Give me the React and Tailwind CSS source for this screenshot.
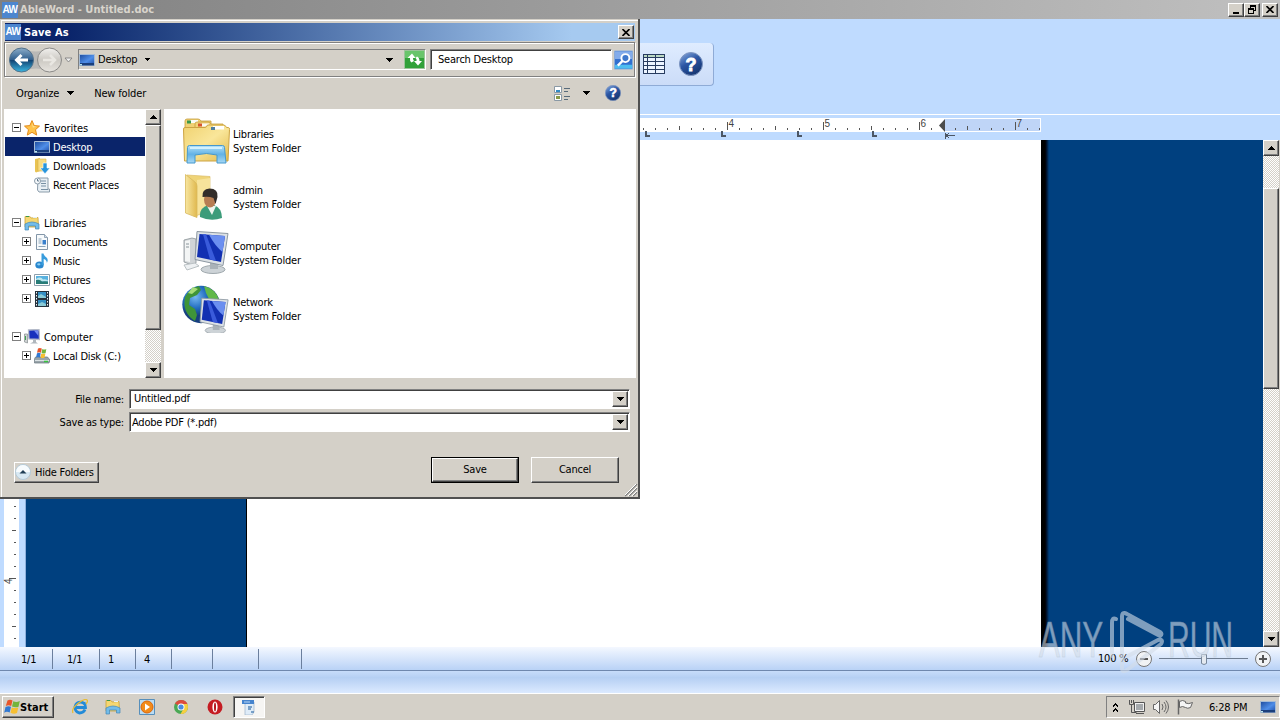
import React from 'react';

const raised =
  'border border-t-white border-l-white border-r-[#404040] border-b-[#404040] bg-[#d4d0c8] shadow-[inset_-1px_-1px_0_#808080]';
const sunken =
  'border border-t-[#808080] border-l-[#808080] border-r-white border-b-white shadow-[inset_1px_1px_0_#404040]';
const track =
  'bg-[conic-gradient(#fff_25%,#d4d0c8_0_50%,#fff_0_75%,#d4d0c8_0)] bg-[length:2px_2px]';

const Arrow = ({ up, className = '' }) => (
  <svg className={className} width="7" height="4" viewBox="0 0 7 4" shapeRendering="crispEdges">
    <path d={up ? 'M3 0h1v1h1v1h1v1h1v1H0V3h1V2h1V1h1z' : 'M0 0h7v1H6v1H5v1H4v1H3V3H2V2H1V1H0z'} />
  </svg>
);

const AwLogo = () => (
  <div className="flex h-4 w-4 shrink-0 items-center justify-center bg-[#4d86cf] font-['Liberation_Sans_Narrow','Liberation_Sans',sans-serif] text-[10px] font-bold tracking-[-0.5px] text-white">
    AW
  </div>
);

const Monitor = ({ size = 16 }) => (
  <svg width={size} height={size} viewBox="0 0 16 16">
    <defs>
      <linearGradient id="screen" x2="1" y2="1">
        <stop stopColor="#1c4a9c" />
        <stop offset=".55" stopColor="#4f8ee8" />
        <stop offset="1" stopColor="#1b4aa5" />
      </linearGradient>
    </defs>
    <path d="M.5 2.5h15v11H.5z" fill="url(#screen)" stroke="#a5bbd5" />
    <path d="M1 11h14v2.5H1z" fill="#1b3f7c" />
    <path d="M1 12h2v1.5H1z" fill="#b7e4ee" />
  </svg>
);

const Star = () => (
  <svg width="16" height="16" viewBox="0 0 16 16">
    <path d="M8 .6l2.200 5 5.300.5-4 3.600 1.200 5.400L8 12.300l-4.700 2.800 1.200-5.400-4-3.600 5.300-.5z" fill="#ffc34a" stroke="#e48a18" />
    <path d="M8 2.500l1.400 3.800 3.400.4-4 .8z" fill="#ffe49a" />
  </svg>
);

const Downloads = () => (
  <svg width="16" height="16" viewBox="0 0 16 16">
    <path d="M1 1l5-1v13l-4 1.500-1-1z" fill="#e9c352" />
    <path d="M4 1h8v12H4z" fill="#f8dc82" stroke="#d7b14c" strokeWidth=".6" />
    <path d="M9 5h4v5h3l-5 5.800L6 10h3z" fill="#2795dd" stroke="#fff" strokeWidth=".6" />
  </svg>
);

const Recent = () => (
  <svg width="16" height="16" viewBox="0 0 16 16">
    <path d="M4 1h10v11h1.500v3H5l-1.500-2z" fill="#e8eff4" stroke="#8b9caa" />
    <path d="M7 4h5M7 6.500h5M7 9h5M7 12.500h7" stroke="#7890a4" />
    <circle cx="3.500" cy="4" r="3" fill="#f6f9fb" stroke="#8b9caa" />
    <path d="M3.500 2v2H5" fill="none" stroke="#60788c" />
  </svg>
);

const LibrarySmall = () => (
  <svg width="16" height="16" viewBox="0 0 16 16">
    <path d="M1 3V1.500h5L7 3l7-.5.5 9.500H1z" fill="#f5d771" stroke="#c9a238" strokeWidth=".8" />
    <path d="M2 1.500h3" stroke="#39964a" />
    <path d="M9 2.500h4" stroke="#e5f1f8" />
    <path d="M1 9q7-4 14 0v5h-3.500v-3h-7v4H1z" fill="#72bce9" stroke="#4386b8" strokeWidth=".7" />
  </svg>
);

const Documents = () => (
  <svg width="16" height="16" viewBox="0 0 16 16">
    <path d="M2.500.5h8l3 3v12h-11z" fill="#f7fafc" stroke="#8396a8" />
    <path d="M10.500.5v3h3" fill="#cfdce7" stroke="#8396a8" strokeWidth=".8" />
    <path d="M4.500 5h3M4.500 7h3M4.500 9h3M4.500 12.500h7" stroke="#8aa4b9" />
    <path d="M8.500 6h3.500v4.500H8.500z" fill="#3980cc" />
  </svg>
);

const Music = () => (
  <svg width="16" height="16" viewBox="0 0 16 16">
    <ellipse cx="5.500" cy="12" rx="4.200" ry="3.600" fill="#2987ce" />
    <path d="M7.500 12V.5h2Q10 3 13 5q1.500 2.500-.2 5Q13 7 9.700 6v6z" fill="#399ddd" />
    <ellipse cx="4.800" cy="11.300" rx="1.700" ry="1.100" fill="#8bd0f4" />
  </svg>
);

const Pictures = () => (
  <svg width="16" height="16" viewBox="0 0 16 16">
    <path d="M.5 2.500h15v11H.5z" fill="#fff" stroke="#8ea0ad" />
    <path d="M2 4h12v8H2z" fill="#58b1df" />
    <path d="M2 7q5-3 7 .5 2-1 5 1v1H2z" fill="#bde8ef" />
    <path d="M2 8q4-1 6 1.500 3-.5 6 0V12H2z" fill="#287c77" />
  </svg>
);

const Videos = () => (
  <svg width="16" height="16" viewBox="0 0 16 16">
    <path d="M1 0h14v16H1z" fill="#26323d" />
    <path d="M4 1h8v6H4zM4 9h8v6H4z" fill="#348fc4" />
    <path d="M4 5l3-2 5 3v1H4zM4 13l4-2 4 2v2H4z" fill="#8acbd7" />
    <path d="M2.500 1v14M13.500 1v14" stroke="#f3f6f8" strokeDasharray="1.500 1.500" />
  </svg>
);

const ComputerSmall = () => (
  <svg width="16" height="16" viewBox="0 0 16 16">
    <path d="M.5 5h3v9l-3-1z" fill="#cfd3d3" stroke="#868e91" strokeWidth=".7" />
    <path d="M1.500 7v4" stroke="#3fa353" />
    <path d="M4.500 1L15 .5l.5 10L5 10z" fill="#1831bd" stroke="#b4bac8" strokeWidth="1.300" />
    <path d="M10 1.500h4v5z" fill="#768df0" />
    <path d="M9 11h3v2l2 1.500H6L9 13z" fill="#b0b7bd" />
  </svg>
);

const Flag = ({ size = 16 }) => (
  <svg width={size} height={size} viewBox="0 0 16 16">
    <path d="M3.500 1.500Q6 0 8.500 1.500L7.200 7Q4.500 5.700 1.800 7z" fill="#e8562a" />
    <path d="M9.300 2.200q3 1.500 6.500-.2L14.500 7.700q-3 1.200-6.500-.2z" fill="#74b43c" />
    <path d="M1.500 8q3-1.500 5.500-.2L5.700 13.500q-3-1.500-5.500.2z" fill="#3179d2" />
    <path d="M7.800 8.500q3.200 1.200 6.500 0L13 14q-3 1.500-6.500-.2z" fill="#f7bf31" />
  </svg>
);

const Disk = () => (
  <svg width="16" height="16" viewBox="0 0 16 16">
    <path d="M1.500 9h12l2.500 3-1 3H.5L0 12z" fill="#9aa5ab" stroke="#66747d" strokeWidth=".7" />
    <path d="M1 12.500h14" stroke="#dce3e5" />
    <path d="M10 13.500h4" stroke="#38c43e" strokeWidth="1.500" />
    <path d="M4 .5q2-1 3.800 0L7 4.700q-2-1-4 0z" fill="#e8562a" />
    <path d="M8.300 1q2 1 4 0L11.600 5q-2 1-4 0z" fill="#74b43c" />
    <path d="M3 5.300q2-1 3.700 0L6 9.500q-2-1-4 0z" fill="#3179d2" />
    <path d="M7.200 5.500q2 1 4.200 0L10.600 9.500q-2 1-4 0z" fill="#f7bf31" />
  </svg>
);

const LibrariesLarge = () => (
  <svg width="48" height="48" viewBox="0 0 48 48">
    <defs>
      <linearGradient id="manila" x2="1" y2="1">
        <stop stopColor="#f0d270" />
        <stop offset=".5" stopColor="#f9e69a" />
        <stop offset="1" stopColor="#e3ba4c" />
      </linearGradient>
      <linearGradient id="stand" x2="0" y2="1">
        <stop stopColor="#b5e2f8" />
        <stop offset=".5" stopColor="#62b2e6" />
        <stop offset="1" stopColor="#a6d8f4" />
      </linearGradient>
    </defs>
    <path d="M3 12V4q0-2 2-2h11q2 0 3 2h10v20H3z" fill="#f0d174" stroke="#c49c3b" strokeWidth=".8" />
    <path d="M8 3h8v3H8z" fill="#f8fbf5" />
    <path d="M5 3.500h4v3H5z" fill="#3b984a" />
    <path d="M13 12V7q0-2 2-2h11q2 0 3 2h12v20H13z" fill="#f2d47a" stroke="#c49c3b" strokeWidth=".8" />
    <path d="M18 6.500h9v3h-9z" fill="#faf8f1" />
    <path d="M16 6.500h4v3h-4z" fill="#d6562d" />
    <path d="M1.500 12q0-1.500 1.500-1.500h20q1.500 0 2.500-2.500h16q2 0 3 2.500h2q1 0 1 2L46 44H2.500z" fill="url(#manila)" stroke="#cda443" />
    <path d="M31 9h11v3.500H31z" fill="#fff" />
    <path d="M29 10h4v3h-4z" fill="#507fa0" />
    <path d="M7.500 28.500h33q2 0 2 2L44 46h-9V38q-10-3-22 0v8H5l.5-15.500q0-2 2-2z" fill="url(#stand)" stroke="#4598ce" />
    <path d="M8 31h32" stroke="#d2f1ff" strokeWidth="2" fill="none" />
  </svg>
);

const AdminLarge = () => (
  <svg width="48" height="48" viewBox="0 0 48 48">
    <defs>
      <linearGradient id="folder" x2="1">
        <stop stopColor="#f8e6a0" />
        <stop offset="1" stopColor="#e0b94f" />
      </linearGradient>
    </defs>
    <path d="M5 2l23 1.500v34l-16 6z" fill="#efd478" stroke="#dcbd68" strokeWidth=".7" />
    <path d="M15 7l13-2v30l-13 7z" fill="#f7e39b" />
    <path d="M3.500 1.500L13 9q2 1.500 2 4v31.500L3.500 40z" fill="url(#folder)" stroke="#d8b95e" strokeWidth=".8" />
    <path d="M18 44q-1-9 8-12h6q8 3 8 13-11 4-22-1z" fill="#3c9c7a" />
    <path d="M25 33l5 9 4-9z" fill="#eef5ee" />
    <ellipse cx="28" cy="26.500" rx="6" ry="8" fill="#b77d53" />
    <path d="M20.500 24q-1-8 7-8.500 9 0 8 8.500l-2 7-2-6q-5-2-11-1z" fill="#332d2a" />
  </svg>
);

const Screen = () => (
  <>
    <ellipse cx="31" cy="40.500" rx="12" ry="4" fill="#cdd3d7" stroke="#9fa8ad" />
    <path d="M28 33h8v7h-8z" fill="#aab2b8" />
    <path d="M15 2.500l31 2L41 36.500l-28-6z" fill="#dce1e5" stroke="#8d98a2" />
    <path d="M17.500 5l25.500 2-4 26-24-5z" fill="#1230b2" />
    <path d="M27 5.800l16 1.200-2.500 16Q33 17 27 5.800z" fill="#6b8ff0" />
    <path d="M21 5.300h3L34 31.800l-6-1.200z" fill="#3a5bdb" />
  </>
);

const ComputerLarge = () => (
  <svg width="48" height="48" viewBox="0 0 48 48">
    <path d="M2 11l8-2 4 1v24l-4 2-8-3z" fill="#d0d4d7" stroke="#8a9397" strokeWidth=".8" />
    <path d="M3 12l5-1v22l-5-1z" fill="#f3f5f5" />
    <path d="M4 15h3M4 18h3" stroke="#89949a" />
    <Screen />
    <path d="M2 36l11-2 4 3-12 4z" fill="#eef1f3" stroke="#bac1c4" />
  </svg>
);

const NetworkLarge = () => (
  <svg width="48" height="48" viewBox="0 0 48 48">
    <defs>
      <radialGradient id="globe" cx=".35" cy=".3">
        <stop stopColor="#77b9f1" />
        <stop offset=".6" stopColor="#226dc0" />
        <stop offset="1" stopColor="#173f7f" />
      </radialGradient>
    </defs>
    <circle cx="19" cy="19.500" r="18.700" fill="url(#globe)" />
    <path d="M3 12Q8 3 17 1l2 4-4 5-7 3-1 7 6 4 2 6-2 6Q0 28 3 12z" fill="#3f9438" />
    <path d="M22 1q12 3 15 14l-5 2-5-3-3-6z" fill="#61b84a" />
    <path d="M11 2l5 2-6 5-4-1z" fill="#a8dd78" />
    <path d="M20 14l7 2 2 8-8 3z" fill="#5fb148" />
    <g transform="translate(7 11) scale(.85)"><Screen /></g>
  </svg>
);

const HelpBall = ({ size }) => (
  <svg width={size} height={size} viewBox="0 0 24 24">
    <defs>
      <linearGradient id="ball" x2=".6" y2="1">
        <stop stopColor="#8fb0e2" />
        <stop offset=".5" stopColor="#2b56a4" />
        <stop offset="1" stopColor="#163672" />
      </linearGradient>
    </defs>
    <circle cx="12" cy="12" r="11.500" fill="url(#ball)" stroke="#7d95c0" />
    <text x="12" y="18.500" textAnchor="middle" fontFamily="Liberation Sans" fontWeight="bold" fontSize="18" fill="#fff" stroke="#fff" strokeWidth=".9">?</text>
  </svg>
);

const tree = [
  { label: 'Favorites', Icon: Star, sign: '-', root: true },
  { label: 'Desktop', Icon: Monitor, selected: true },
  { label: 'Downloads', Icon: Downloads },
  { label: 'Recent Places', Icon: Recent },
  null,
  { label: 'Libraries', Icon: LibrarySmall, sign: '-', root: true },
  { label: 'Documents', Icon: Documents, sign: '+' },
  { label: 'Music', Icon: Music, sign: '+' },
  { label: 'Pictures', Icon: Pictures, sign: '+' },
  { label: 'Videos', Icon: Videos, sign: '+' },
  null,
  { label: 'Computer', Icon: ComputerSmall, sign: '-', root: true },
  { label: 'Local Disk (C:)', Icon: Disk, sign: '+' },
];

const files = [
  { label: 'Libraries', Icon: LibrariesLarge },
  { label: 'admin', Icon: AdminLarge },
  { label: 'Computer', Icon: ComputerLarge },
  { label: 'Network', Icon: NetworkLarge },
];

const Sign = ({ sign }) => (
  <svg width="9" height="9" viewBox="0 0 9 9" shapeRendering="crispEdges">
    {sign && <path d="M.5.5h8v8h-8z" fill="#fff" stroke="#808080" />}
    {sign && <path d={sign === '+' ? 'M2 4h5v1H2zM4 2h1v5H4z' : 'M2 4h5v1H2z'} />}
  </svg>
);

function TreeRow({ item }) {
  if (!item) return <div className="h-[19px]" />;
  const { label, Icon, sign, root, selected } = item;
  return (
    <div className={`flex h-[19px] items-center gap-[3px] ${root ? 'pl-[7px]' : 'pl-[17px]'} ${selected ? 'bg-[#0a246a] text-white' : ''}`}>
      <Sign sign={sign} />
      <Icon />
      <span className={`pt-0.5 ${root ? 'pl-px tracking-[-0.05px]' : ''}`}>{label}</span>
    </div>
  );
}

function ScrollBar({ before, thumb }) {
  return (
    <div className={`flex w-4 shrink-0 flex-col ${track}`}>
      <div className={`flex h-4 items-center justify-center ${raised}`}><Arrow up /></div>
      <div className={before} />
      <div className={`${thumb} ${raised}`} />
      <div className="flex-1" />
      <div className={`flex h-4 items-center justify-center ${raised}`}><Arrow /></div>
    </div>
  );
}

function Combo({ label, value, pad }) {
  return (
    <div className="flex h-5 items-center">
      <span className="w-[120px] pt-0.5 text-right">{label}</span>
      <div className={`ml-[5px] flex h-5 w-[501px] items-center bg-white p-px ${sunken}`}>
        <span className={`flex-1 ${pad}`}>{value}</span>
        <div className={`flex h-full w-4 items-center justify-center ${raised}`}><Arrow /></div>
      </div>
    </div>
  );
}

function CloseButton() {
  return (
    <div className={`flex h-[14px] w-4 items-center justify-center ${raised}`}>
      <svg width="8" height="7" viewBox="0 0 8 7"><path d="M.5 0L7.500 7M7.500 0L.5 7" stroke="#000" strokeWidth="1.600" /></svg>
    </div>
  );
}

function SaveDialog() {
  return (
    <div className="absolute top-[19px] left-0 flex h-[480px] w-[640px] flex-col border-r-2 border-b-2 border-[#505050] bg-[#d4d0c8] pt-1 pl-1 shadow-[inset_1px_1px_0_#d4d0c8,inset_2px_2px_0_#fff]">
      <div className="ml-px flex h-[18px] w-[630px] items-center bg-linear-to-r from-[#0a246a] from-10% to-[#a6caf0] to-90% pr-px">
        <AwLogo />
        <span className="ml-[3px] flex-1 pt-px font-bold tracking-[0.1px] text-white">Save As</span>
        <CloseButton />
      </div>

      <div className="mt-px flex h-[35px] w-[631px] items-center border border-[#808080] pl-1 shadow-[inset_1px_1px_0_#fff,1px_1px_0_#fff]">
        <svg width="66" height="28" viewBox="0 0 66 28">
          <defs>
            <linearGradient id="back" x2="0" y2="1">
              <stop stopColor="#8cadc9" />
              <stop offset=".48" stopColor="#315f8d" />
              <stop offset=".52" stopColor="#124574" />
              <stop offset="1" stopColor="#3bb7e2" />
            </linearGradient>
            <linearGradient id="forward" x2="0" y2="1">
              <stop stopColor="#f1f0ed" />
              <stop offset=".5" stopColor="#ccc9c3" />
              <stop offset="1" stopColor="#e7e4df" />
            </linearGradient>
          </defs>
          <path d="M12 3q15 5 30 0v22q-15-5-30 0z" fill="#b9b8b6" />
          <circle cx="12.500" cy="14" r="12" fill="url(#back)" stroke="#52718a" />
          <circle cx="40.500" cy="14" r="12" fill="url(#forward)" stroke="#8b8a88" />
          <path d="M12.500 9L7.500 14l5 5M8 14h11" stroke="#fff" strokeWidth="3" fill="none" />
          <path d="M41 9l5 5-5 5M34 14h11" stroke="#e9e7e2" strokeWidth="2.500" fill="none" />
          <path d="M56 12h7l-3.500 4z" fill="#eee" stroke="#777" strokeWidth=".8" />
        </svg>
        <div className="ml-[3px] flex h-[21px] w-[348px] items-center border border-t-[#808080] border-l-[#808080] border-r-white border-b-white">
          <Monitor />
          <span className="ml-[3px]">Desktop</span>
          <svg className="ml-2" width="5" height="3" viewBox="0 0 5 3" shapeRendering="crispEdges"><path d="M0 0h5v1H4v1H3v1H2V2H1V1H0z" /></svg>
          <Arrow className="ml-auto" />
          <svg className="ml-[11px]" width="21" height="19" viewBox="0 0 21 19">
            <path d="M.5.5h20v18H.5z" fill="#31a139" stroke="#9cc49a" />
            <path d="M1 1h19v7H1z" fill="#69c56b" />
            <path d="M7.500 12.500Q5.500 11 6 8H3.500L8 3.500 11.500 8H9q0 2 1 3zM13 6.500q2.500 1 2.500 4.500h2.500l-4 4.500L10 11h2.500q.5-2-1-3z" fill="#fff" />
          </svg>
        </div>
        <div className={`ml-1 flex h-[21px] w-[182px] items-center bg-white pt-px pl-[7px] ${sunken}`}>Search Desktop</div>
        <svg className="ml-0.5" width="19" height="20" viewBox="0 0 20 20">
          <path d="M.5.5h19v19H.5z" fill="#3270cf" stroke="#8badd8" />
          <path d="M1 1h18v8H1z" fill="#83aceb" />
          <path d="M1 15h18v4H1z" fill="#4dbdf0" />
          <circle cx="12" cy="8" r="4.200" fill="#3f78cc" stroke="#fff" strokeWidth="2" />
          <path d="M9 11l-5 5" stroke="#fff" strokeWidth="2.500" />
        </svg>
      </div>

      <div className="flex h-8 items-center pl-3 tracking-[-0.15px]">
        <span className="pt-px">Organize</span>
        <Arrow className="ml-2" />
        <span className="ml-5 pt-px">New folder</span>
        <svg className="ml-auto" width="16" height="15" viewBox="0 0 16 15">
          <path d="M.5.5h7v6h-7zM.5 8.500h7v6h-7z" fill="#fff" stroke="#8a99a5" />
          <path d="M2 4h4v2H2z" fill="#328ac5" />
          <path d="M2 10h4v3H2z" fill="#8a9a49" />
          <path d="M10 2.500h6M10 5.500h4M10 10.500h6M10 13.500h4" stroke="#586b7b" />
        </svg>
        <Arrow className="ml-[13px]" />
        <div className="mr-[17px] ml-[15px]"><HelpBall size={16} /></div>
      </div>

      <div className="flex h-[269px] w-[632px] bg-white">
        <div className="ml-px w-[140px] pt-[9px]">
          {tree.map((item, i) => <TreeRow key={i} item={item} />)}
        </div>
        <ScrollBar before="h-0" thumb="h-[205px]" />
        <div className="w-[3px] bg-[#d4d0c8]" />
        <div className="flex-1 pt-1 pl-[18px]">
          {files.map(({ label, Icon }) => (
            <div key={label} className="flex h-14 items-center">
              <Icon />
              <div className="ml-[3px] pt-0.5 leading-[14px]">
                <div>{label}</div>
                <div>System Folder</div>
              </div>
            </div>
          ))}
        </div>
      </div>

      <div className="mt-[11px] flex flex-col gap-[3px]">
        <Combo label="File name:" value="Untitled.pdf" pad="pl-[3px]" />
        <Combo label="Save as type:" value="Adobe PDF (*.pdf)" pad="pl-px pt-px" />
      </div>

      <div className="mt-[25px] flex h-[26px] items-center pl-2.5">
        <div className={`mt-1 flex h-[21px] w-[85px] items-center ${raised}`}>
          <svg width="16" height="16" viewBox="0 0 16 16">
            <circle cx="8" cy="8" r="7.500" fill="#d9e9f3" stroke="#b5cad8" />
            <path d="M1 8a7 7 0 0114 0z" fill="#f7fbfd" />
            <path d="M4.500 9.500L8 6l3.500 3.500z" fill="#203e55" />
          </svg>
          <span className="ml-1 pt-0.5">Hide Folders</span>
        </div>
        <div className="ml-[332px] h-[26px] w-[88px] border border-black">
          <div className={`flex h-full items-center justify-center ${raised}`}>Save</div>
        </div>
        <div className={`ml-3 flex h-[26px] w-[88px] items-center justify-center ${raised}`}>Cancel</div>
      </div>
      <svg className="mt-px ml-auto" width="13" height="13" viewBox="0 0 13 13">
        <path d="M0 12L12 0M4 12l8-8M8 12l4-4" stroke="#808080" strokeWidth="1.500" />
        <path d="M-1 12L12-1M3 12l9-9M7 12l5-5" stroke="#fff" />
      </svg>
    </div>
  );
}

function Ruler() {
  const ticks = [];
  for (let i = -7; i < 27; i++) ticks.push(i);
  return (
    <svg className="block" width="1280" height="25" viewBox="0 115 1280 25" shapeRendering="crispEdges">
      <path d="M0 118h945v14H0z" fill="#fff" />
      <path d="M944.500 118.500h96v13h-96z" fill="#bfd5f7" stroke="#fff" />
      {ticks.map((i) => {
        const top = i % 8 === 0 ? 122 : i % 4 === 0 ? 126 : 128;
        return <path key={i} d={`M${727.5 + i * 12} ${top}V130`} stroke="#555" />;
      })}
      {[4, 5, 6, 7].map((n) => (
        <text key={n} x={728.5 + (n - 4) * 96} y="127" fontSize="10" fontFamily="Liberation Sans" fill="#444">{n}</text>
      ))}
      {[645, 721, 797, 872].map((x) => (
        <path key={x} d={`M${x} 131h2v4h3v2h-5z`} fill="#4c5664" />
      ))}
      <path d="M945 119v13l-6-6.500z" fill="#4c4c4c" shapeRendering="auto" />
      <path d="M945.500 133v6M946 135.500h9M949 133l-3 2.500 3 2.500" fill="none" stroke="#4c5664" />
    </svg>
  );
}

function VerticalRuler() {
  const ticks = [];
  for (let y = 506; y < 647; y += 12) ticks.push(y);
  return (
    <svg className="block shrink-0" width="26" height="507" viewBox="0 140 26 507" shapeRendering="crispEdges">
      <path d="M0 140h26v507H0z" fill="#bfdbff" />
      <path d="M4 140h15v507H4z" fill="#fff" />
      <path d="M25.500 140v507" stroke="#8fb0dc" />
      {ticks.map((y) => (
        <path key={y} d={`M${y === 578 ? 9 : y === 626 || y === 530 ? 12 : 14} ${y + 0.5}H16`} stroke="#555" />
      ))}
      <text transform="translate(12 584) rotate(-90)" fontSize="10" fontFamily="Liberation Sans" fill="#444">4</text>
    </svg>
  );
}

function Watermark() {
  return (
    <svg className="absolute top-[600px] left-[1030px] opacity-60" width="220" height="80" viewBox="1030 600 220 80">
      <g fill="#d3dde9" stroke="#a9bacb" strokeWidth=".5" fontFamily="Liberation Sans Narrow, Liberation Sans" fontSize="50">
        <text x="1039" y="657" textLength="64" lengthAdjust="spacingAndGlyphs">ANY</text>
        <text x="1168" y="657" textLength="65" lengthAdjust="spacingAndGlyphs">RUN</text>
      </g>
      <g fill="none" stroke="#d3dde9" strokeWidth="4" strokeLinejoin="round" strokeLinecap="round">
        <path d="M1116 619q-4-2-4 4v33" />
        <path d="M1122 648v-31q0-6 5-3l33 18q3 2 0 4l-32-17" />
        <path d="M1122 648v20q0 5 5 2l34-26q3-5-3-4l-30 16" />
      </g>
    </svg>
  );
}

function StatusBar() {
  return (
    <div className="flex h-6 items-center border-b border-[#6f87ad] bg-linear-to-b from-[#f4f8ff] to-[#b9d2f6] [&>div]:h-5 [&>div]:border-r [&>div]:border-[#6b7f9d] [&>div]:pt-1">
      <div className="w-[53px] pl-[21px]">1/1</div>
      <div className="w-[47px] pl-3.5">1/1</div>
      <div className="w-9 pl-2">1</div>
      <div className="w-9 pl-2">4</div>
      <div className="w-[41px]" />
      <div className="w-[46px]" />
      <div className="w-[43px]" />
      <span className="ml-[796px] pt-px">100 %</span>
      <svg className="ml-auto mr-2" width="137" height="18" viewBox="0 0 137 18">
        <g fill="#f1f3f5" stroke="#777">
          <circle cx="9" cy="9" r="7.500" />
          <circle cx="128" cy="9" r="7.500" />
        </g>
        <path d="M5 9h8M124 9h8M128 5v8" stroke="#555" strokeWidth="2" />
        <path d="M24 8.500h89" stroke="#6e7d91" />
        <path d="M66.500 4.500h5v9l-2.500 1-2.500-1z" fill="#e5eaf0" stroke="#76869b" />
      </svg>
    </div>
  );
}

function TaskBar() {
  return (
    <div className="flex h-[27px] items-center border-t border-white bg-[#d4d0c8] pl-0.5">
      <div className={`flex h-[22px] w-[52px] items-center pl-px font-bold tracking-[0.05px] ${raised}`}>
        <Flag />
        <span className="pt-px">Start</span>
      </div>
      <svg className="ml-[18px]" width="16" height="16" viewBox="0 0 16 16">
        <path d="M13 5.500A5.500 5.500 0 107.500 14q4 0 5.500-3.500M3.500 8.500h10q0-3-1.500-5" stroke="#238bd8" strokeWidth="2.800" fill="none" />
        <path d="M1 14Q-1 10 6 4.500T15 1q1.500 1-1 4" stroke="#e7bc37" strokeWidth="1.300" fill="none" />
      </svg>
      <div className="ml-[17px]"><LibrarySmall /></div>
      <svg className="ml-[18px]" width="16" height="16" viewBox="0 0 16 16">
        <path d="M.5.5h15v15H.5z" fill="#badcf4" stroke="#578fbb" />
        <circle cx="8" cy="8" r="6" fill="#f28b1b" stroke="#dc6508" />
        <path d="M6 4.500L11 8l-5 3.500z" fill="#fff" />
      </svg>
      <svg className="ml-[18px]" width="16" height="16" viewBox="0 0 16 16">
        <circle cx="8" cy="8" r="7" fill="#4aa854" />
        <path d="M8 8L2 4.500A7 7 0 0114.500 5H8z" fill="#dd4b3d" />
        <path d="M8 8h7A7 7 0 017.500 15L11 9z" fill="#f7cf40" />
        <path d="M8 5h6.500l.5 3H8z" fill="#f7cf40" />
        <circle cx="8" cy="8" r="3.500" fill="#fff" />
        <circle cx="8" cy="8" r="2.600" fill="#4b8cdf" />
      </svg>
      <svg className="ml-[18px]" width="16" height="16" viewBox="0 0 16 16">
        <circle cx="8" cy="8" r="7.500" fill="#c51c22" />
        <ellipse cx="8" cy="8" rx="2.600" ry="5.500" fill="#fff" />
        <ellipse cx="8" cy="8" rx="1" ry="4.500" fill="#b5151b" />
      </svg>
      <div className={`ml-2.5 flex h-[22px] w-8 items-center justify-center bg-[#f6f5f3] ${sunken}`}>
        <svg width="16" height="16" viewBox="0 0 16 16">
          <path d="M4 3h9v10l-2 3H4z" fill="#dfecf8" stroke="#9cb2c9" strokeWidth=".7" />
          <path d="M1 1h12v4H1z" fill="#4684ce" />
          <path d="M3 3h6" stroke="#b9d6f3" />
          <path d="M7 8h4M7 10h3M10 13h3" stroke="#5786b8" strokeWidth="1.500" />
        </svg>
      </div>
      <div className="ml-auto flex h-[22px] w-[174px] items-center border border-t-[#808080] border-l-[#808080] border-r-white border-b-white pl-1.5">
        <svg width="5" height="9" viewBox="0 0 5 9" shapeRendering="crispEdges"><path d="M2 0h1v1h1v1h1v2H4V3H3V2H2v1H1v1H0V2h1V1h1zM2 5h1v1h1v1h1v2H4V8H3V7H2v1H1v1H0V7h1V6h1z" /></svg>
        <svg className="ml-[11px]" width="16" height="16" viewBox="0 0 16 16" fill="#f1f1f1" stroke="#555">
          <path d="M5.500 3.500h10v9h-10zM7 14.500h8" />
          <path d="M7 5h7v6H7z" fill="#a5a9ac" stroke="none" />
          <path d="M.5 1v4.500h4V1M2.500 1v3M2.500 6v7.500h5" fill="none" />
        </svg>
        <svg className="ml-2" width="16" height="16" viewBox="0 0 16 16" fill="#f5f5f5" stroke="#666">
          <path d="M.5 5.500h2l4-4v13l-4-4h-2z" />
          <path d="M9 5q2 3 0 6M11 3q4 5 0 10M13 1.500q5 6.500 0 13" fill="none" />
        </svg>
        <svg className="ml-2" width="17" height="16" viewBox="0 0 17 16" fill="#f5f5f5" stroke="#666">
          <path d="M2.500 2.500q3-2 6 0v1.500q3 1.500 7-.5l-2 5q-3 1.500-5 0-3-2-6 0z" />
          <path d="M1.500.5v15" strokeWidth="1.500" />
        </svg>
        <span className="ml-[15px] pt-px">6:28 PM</span>
        <div className="mr-[3px] ml-auto"><Monitor /></div>
      </div>
    </div>
  );
}

export default function App() {
  return (
    <div className="relative flex h-[720px] w-[1280px] flex-col overflow-hidden bg-[#bfdbff] font-['DejaVu_Sans_Condensed','DejaVu_Sans',sans-serif] text-[11px] leading-[14px] tracking-[-0.22px] whitespace-nowrap text-black">
      <div className="flex h-[19px] items-center bg-linear-to-r from-[#808080] to-[#c0c0c0] pr-0.5 pl-0.5">
        <AwLogo />
        <span className="ml-0.5 flex-1 font-bold tracking-[0.02px] text-[#d8d4cc]">AbleWord - Untitled.doc</span>
        <div className={`flex h-[14px] w-4 items-end justify-center pb-0.5 ${raised}`}><div className="h-0.5 w-1.5 bg-black" /></div>
        <div className={`flex h-[14px] w-4 items-center justify-center ${raised}`}>
          <svg width="9" height="9" viewBox="0 0 9 9" shapeRendering="crispEdges"><path d="M2 0h6v6H6V5h1V2H3v1H2zM0 3h6v6H0zm1 2v3h4V5z" fillRule="evenodd" /></svg>
        </div>
        <div className="ml-0.5"><CloseButton /></div>
      </div>

      <div className="flex h-24 items-start border-b border-white pt-6 pl-[640px]">
        <div className="flex h-[43px] w-[74px] items-center gap-[14px] rounded-r-sm border-r border-b border-[#8fabd6] bg-linear-to-b from-[#dfecff] to-[#cbdcf8] pl-[3px]">
          <svg width="22" height="20" viewBox="0 0 22 20" shapeRendering="crispEdges">
            <path d="M0 0h22v20H0z" fill="#ecf4ff" />
            <path d="M0 0h22v4H0z" fill="#bcd9c3" />
            <path d="M0 .5h22M0 3.500h22M0 7.500h22M0 11.500h22M0 15.500h22M0 19.500h22M.5 0v20M4.500 0v20M12.500 0v20M21.500 0v20" stroke="#283c60" />
          </svg>
          <HelpBall size={24} />
        </div>
      </div>
      <Ruler />

      <div className="flex h-[507px] bg-[#00407f]">
        <VerticalRuler />
        <div className="ml-[220px] w-[795px] border-l border-black bg-white" />
        <div className="w-2 bg-linear-to-r from-black from-40% to-[#00407f]" />
        <div className="flex-1" />
        <ScrollBar before="h-8" thumb="h-[201px]" />
        <div className="w-px bg-[#d4d0c8]" />
      </div>

      <StatusBar />
      <div className="h-[22px] bg-linear-to-b from-[#c7dcfa] via-[#b5cff3] via-30% to-[#dceaff]" />
      <TaskBar />
      <SaveDialog />
      <Watermark />
    </div>
  );
}
